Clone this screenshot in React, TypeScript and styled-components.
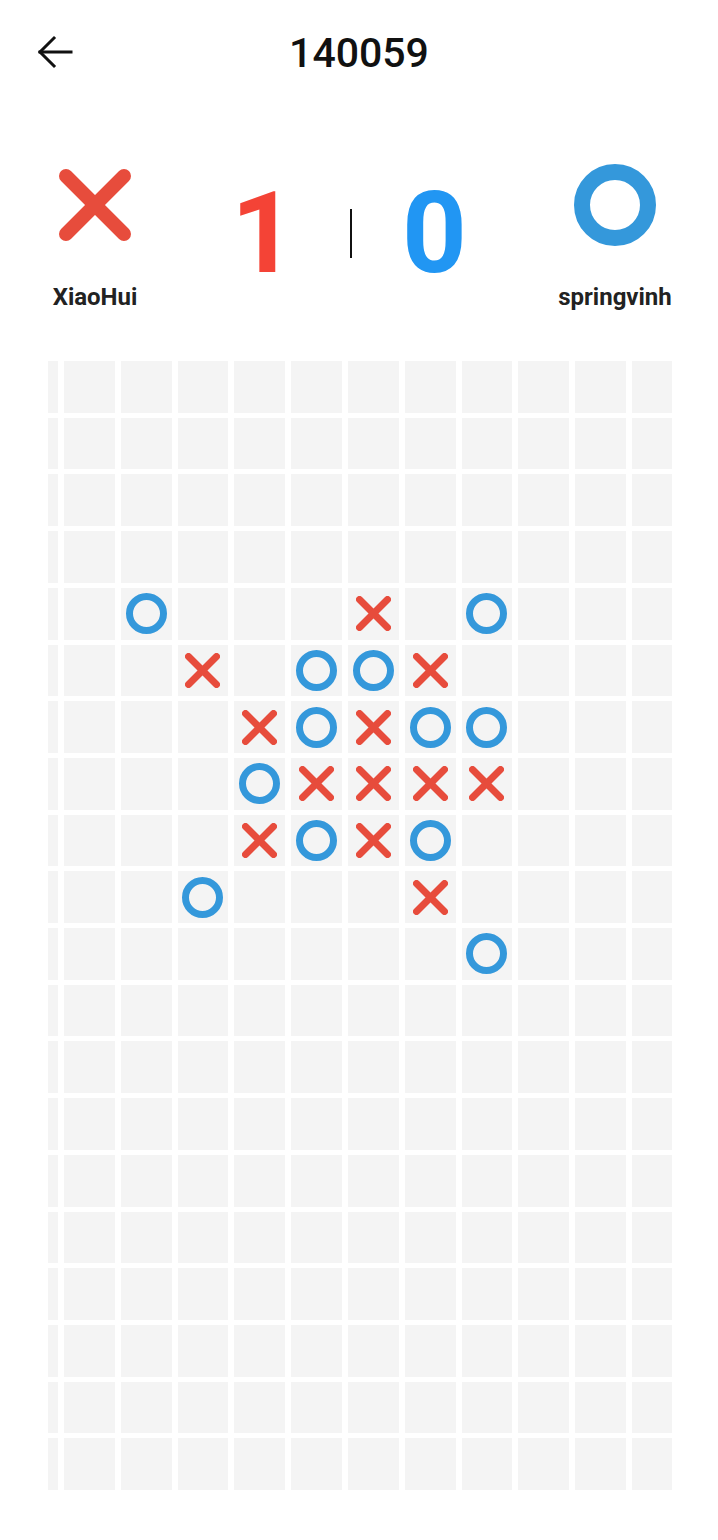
import React from 'react'
import styled, { createGlobalStyle } from 'styled-components'

const RED = '#E74C3C'
const BLUE = '#3498DB'

const GlobalStyle = createGlobalStyle`
    body {
        margin: 0;
        background: #FFFFFF;
        font-family: Roboto, 'Liberation Sans', sans-serif;
    }
`

type Mark = 'x' | 'o'

const ROWS = 20
const COLS = 12

// [row, col, mark]
const moves: [number, number, Mark][] = [
    [4, 2, 'o'], [4, 6, 'x'], [4, 8, 'o'],
    [5, 3, 'x'], [5, 5, 'o'], [5, 6, 'o'], [5, 7, 'x'],
    [6, 4, 'x'], [6, 5, 'o'], [6, 6, 'x'], [6, 7, 'o'], [6, 8, 'o'],
    [7, 4, 'o'], [7, 5, 'x'], [7, 6, 'x'], [7, 7, 'x'], [7, 8, 'x'],
    [8, 4, 'x'], [8, 5, 'o'], [8, 6, 'x'], [8, 7, 'o'],
    [9, 3, 'o'], [9, 7, 'x'],
    [10, 8, 'o'],
]

const buildBoard = () => {
    const board: (Mark | null)[][] = Array.from({ length: ROWS }, () => Array(COLS).fill(null))
    moves.forEach(([r, c, m]) => { board[r][c] = m })
    return board
}

const XMark = ({ size, stroke }: { size: number; stroke: number }) => (
    <svg width={size} height={size} viewBox={`0 0 ${size} ${size}`}>
        <g stroke={RED} strokeWidth={stroke} strokeLinecap="round">
            <line x1={stroke / 2} y1={stroke / 2} x2={size - stroke / 2} y2={size - stroke / 2} />
            <line x1={size - stroke / 2} y1={stroke / 2} x2={stroke / 2} y2={size - stroke / 2} />
        </g>
    </svg>
)

const OMark = ({ size, stroke }: { size: number; stroke: number }) => (
    <svg width={size} height={size} viewBox={`0 0 ${size} ${size}`}>
        <circle cx={size / 2} cy={size / 2} r={(size - stroke) / 2} fill="none" stroke={BLUE} strokeWidth={stroke} />
    </svg>
)

const BackArrow = () => (
    <svg width="36" height="36" viewBox="0 0 36 36">
        <g stroke="#111" strokeWidth="3" fill="none" strokeLinecap="square">
            <line x1="3" y1="17" x2="34" y2="17" />
            <polyline points="17,3 3,17 17,31" />
        </g>
    </svg>
)

const App = () => {
    const board = buildBoard()
    return (
        <>
            <GlobalStyle />
            <Page>
                <Header>
                    <BackBtn><BackArrow /></BackBtn>
                    <Title>140059</Title>
                    <div />
                </Header>

                <ScoreRow>
                    <Player>
                        <PlayerIcon><XMark size={72} stroke={14} /></PlayerIcon>
                        <PlayerName>XiaoHui</PlayerName>
                    </Player>
                    <Scores>
                        <ScoreNum $color="#F44336">1</ScoreNum>
                        <ScoreDivider />
                        <ScoreNum $color="#2196F3">0</ScoreNum>
                    </Scores>
                    <Player>
                        <PlayerIcon><OMark size={82} stroke={16} /></PlayerIcon>
                        <PlayerName>springvinh</PlayerName>
                    </Player>
                </ScoreRow>

                <Board>
                    {board.map((row, r) =>
                        row.map((cell, c) => (
                            <Cell key={`${r}-${c}`}>
                                {cell === 'x' && <XMark size={35} stroke={7} />}
                                {cell === 'o' && <OMark size={41} stroke={7} />}
                            </Cell>
                        ))
                    )}
                </Board>
            </Page>
        </>
    )
}

const Page = styled.div`
    width: 718px;
    min-height: 1540px;
    background: #FFFFFF;
`
const Header = styled.div`
    height: 106px;
    display: grid;
    grid-template-columns: 120px 1fr 120px;
    align-items: center;
`
const BackBtn = styled.div`
    display: flex;
    align-items: center;
    padding-left: 37px;
    height: 36px;
`
const Title = styled.div`
    text-align: center;
    font-size: 41px;
    font-weight: 500;
    color: #111111;
    line-height: 48px;
`
const ScoreRow = styled.div`
    margin-top: 58px;
    display: grid;
    grid-template-columns: 110px 1fr 110px;
    padding: 0 48px 0 40px;
    align-items: start;
`
const Player = styled.div`
    display: flex;
    flex-direction: column;
    align-items: center;
`
const PlayerIcon = styled.div`
    height: 82px;
    display: flex;
    align-items: center;
    justify-content: center;
`
const PlayerName = styled.div`
    margin-top: 37px;
    font-size: 24px;
    line-height: 28px;
    font-weight: 700;
    color: #222222;
    white-space: nowrap;
`
const Scores = styled.div`
    margin-top: 13px;
    padding-right: 13px;
    display: flex;
    justify-content: center;
    align-items: center;
`
const ScoreNum = styled.div<{ $color: string }>`
    width: 64px;
    text-align: center;
    font-size: 113px;
    line-height: 113px;
    font-weight: 700;
    color: ${(p) => p.$color};
`
const ScoreDivider = styled.div`
    width: 2px;
    height: 49px;
    margin: 0 50px 0 55px;
    background: #111111;
`
const Board = styled.div`
    margin: 50px 0 0 48px;
    width: 624px;
    height: 1129px;
    display: grid;
    grid-template-columns: 10px repeat(10, 1fr) 40px;
    grid-template-rows: repeat(${ROWS}, 1fr);
    column-gap: 6px;
    row-gap: 5px;
`
const Cell = styled.div`
    background: #F4F4F4;
    display: flex;
    align-items: center;
    justify-content: center;
    overflow: hidden;
`

export default App
